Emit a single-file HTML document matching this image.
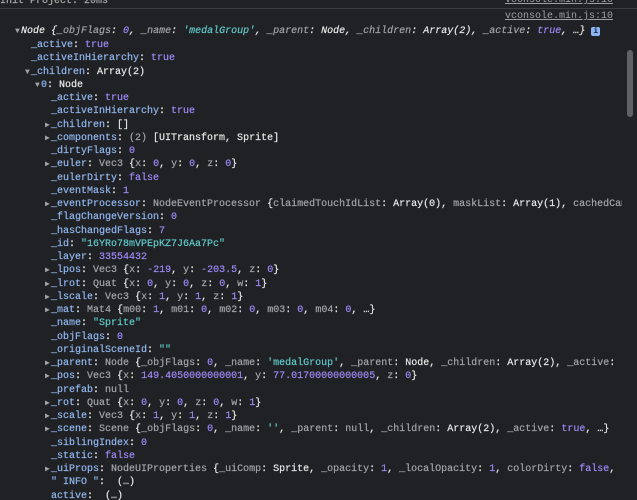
<!DOCTYPE html>
<html><head><meta charset="utf-8"><style>
html,body{margin:0;padding:0;background:#202124;width:637px;height:500px;overflow:hidden}
body{font-family:"Liberation Mono","DejaVu Sans Mono",monospace;font-size:10px;color:#e8e8e8;position:relative}
#c{position:absolute;left:0;top:0;width:622px;height:500px;overflow:hidden}
.l{position:absolute;white-space:pre;line-height:13px;height:13px;left:0;-webkit-text-stroke:0.2px currentColor}
.k{color:#8fb6ee}.v{color:#9d87f5}.s{color:#5fc9c9}.d{color:#a0a4a9}.w{color:#e8e8e8}
.t{color:#a0a4a9;font-size:8px;display:inline-block;width:6px;-webkit-text-stroke:0}
.src{position:absolute;right:24px;color:#9aa0a6;text-decoration:underline;white-space:pre}
.sep{position:absolute;left:0;right:0;top:8px;height:1px;background:#3c3d40}
.sb{position:absolute;left:627px;top:50px;width:6px;height:67px;border-radius:3px;background:#5f6165}
i{font-style:italic}
.info{display:inline-block;width:9px;height:9px;background:#8ab4f8;color:#202124;border-radius:2px;font-size:8px;line-height:9px;text-align:center;font-style:normal;font-weight:bold;vertical-align:0px;-webkit-text-stroke:0}
</style></head><body>
<div class="l" style="top:-5px;left:0;color:#aaa">Init Project: 20ms</div>
<div class="src" style="top:-5px">vconsole.min.js:10</div>
<div class="sep"></div>
<div class="src" style="top:11px">vconsole.min.js:10</div>
<div class="l" style="top:25px;left:15px"><span class="t">▼</span><i>Node {<span class="d">_objFlags</span>: <span class="v">0</span>, <span class="d">_name</span>: <span class="s">'medalGroup'</span>, <span class="d">_parent</span>: Node, <span class="d">_children</span>: Array(2), <span class="d">_active</span>: <span class="v">true</span>, …}</i> <span class="info">i</span></div>
<div id="c">
<div class="l" style="top:39px;left:31px"><span class="k">_active</span>: <span class="v">true</span></div>
<div class="l" style="top:52px;left:31px"><span class="k">_activeInHierarchy</span>: <span class="v">true</span></div>
<div class="l" style="top:66px;left:25px"><span class="t">▼</span><span class="k">_children</span>: Array(2)</div>
<div class="l" style="top:79px;left:35px"><span class="t">▼</span><span class="k">0</span>: Node</div>
<div class="l" style="top:92px;left:51px"><span class="k">_active</span>: <span class="v">true</span></div>
<div class="l" style="top:105px;left:51px"><span class="k">_activeInHierarchy</span>: <span class="v">true</span></div>
<div class="l" style="top:119px;left:45px"><span class="t">▶</span><span class="k">_children</span>: []</div>
<div class="l" style="top:132px;left:45px"><span class="t">▶</span><span class="k">_components</span>: <span class="d">(2)</span> [UITransform, Sprite]</div>
<div class="l" style="top:145px;left:51px"><span class="k">_dirtyFlags</span>: <span class="v">0</span></div>
<div class="l" style="top:158px;left:45px"><span class="t">▶</span><span class="k">_euler</span>: <span class="d">Vec3</span> {<span class="d">x</span>: <span class="v">0</span>, <span class="d">y</span>: <span class="v">0</span>, <span class="d">z</span>: <span class="v">0</span>}</div>
<div class="l" style="top:172px;left:51px"><span class="k">_eulerDirty</span>: <span class="v">false</span></div>
<div class="l" style="top:185px;left:51px"><span class="k">_eventMask</span>: <span class="v">1</span></div>
<div class="l" style="top:198px;left:45px"><span class="t">▶</span><span class="k">_eventProcessor</span>: <span class="d">NodeEventProcessor</span> {<span class="d">claimedTouchIdList</span>: Array(0), <span class="d">maskList</span>: Array(1), <span class="d">cachedCameras</span></div>
<div class="l" style="top:211px;left:51px"><span class="k">_flagChangeVersion</span>: <span class="v">0</span></div>
<div class="l" style="top:225px;left:51px"><span class="k">_hasChangedFlags</span>: <span class="v">7</span></div>
<div class="l" style="top:238px;left:51px"><span class="k">_id</span>: <span class="s">"16YRo78mVPEpKZ7J6Aa7Pc"</span></div>
<div class="l" style="top:251px;left:51px"><span class="k">_layer</span>: <span class="v">33554432</span></div>
<div class="l" style="top:264px;left:45px"><span class="t">▶</span><span class="k">_lpos</span>: <span class="d">Vec3</span> {<span class="d">x</span>: <span class="v">-219</span>, <span class="d">y</span>: <span class="v">-203.5</span>, <span class="d">z</span>: <span class="v">0</span>}</div>
<div class="l" style="top:278px;left:45px"><span class="t">▶</span><span class="k">_lrot</span>: <span class="d">Quat</span> {<span class="d">x</span>: <span class="v">0</span>, <span class="d">y</span>: <span class="v">0</span>, <span class="d">z</span>: <span class="v">0</span>, <span class="d">w</span>: <span class="v">1</span>}</div>
<div class="l" style="top:291px;left:45px"><span class="t">▶</span><span class="k">_lscale</span>: <span class="d">Vec3</span> {<span class="d">x</span>: <span class="v">1</span>, <span class="d">y</span>: <span class="v">1</span>, <span class="d">z</span>: <span class="v">1</span>}</div>
<div class="l" style="top:304px;left:45px"><span class="t">▶</span><span class="k">_mat</span>: <span class="d">Mat4</span> {<span class="d">m00</span>: <span class="v">1</span>, <span class="d">m01</span>: <span class="v">0</span>, <span class="d">m02</span>: <span class="v">0</span>, <span class="d">m03</span>: <span class="v">0</span>, <span class="d">m04</span>: <span class="v">0</span>, …}</div>
<div class="l" style="top:317px;left:51px"><span class="k">_name</span>: <span class="s">"Sprite"</span></div>
<div class="l" style="top:331px;left:51px"><span class="k">_objFlags</span>: <span class="v">0</span></div>
<div class="l" style="top:344px;left:51px"><span class="k">_originalSceneId</span>: <span class="s">""</span></div>
<div class="l" style="top:357px;left:45px"><span class="t">▶</span><span class="k">_parent</span>: <span class="d">Node</span> {<span class="d">_objFlags</span>: <span class="v">0</span>, <span class="d">_name</span>: <span class="s">'medalGroup'</span>, <span class="d">_parent</span>: Node, <span class="d">_children</span>: Array(2), <span class="d">_active</span>: <span class="v">true</span></div>
<div class="l" style="top:370px;left:45px"><span class="t">▶</span><span class="k">_pos</span>: <span class="d">Vec3</span> {<span class="d">x</span>: <span class="v">149.4050000000001</span>, <span class="d">y</span>: <span class="v">77.01700000000005</span>, <span class="d">z</span>: <span class="v">0</span>}</div>
<div class="l" style="top:384px;left:51px"><span class="k">_prefab</span>: <span class="d">null</span></div>
<div class="l" style="top:397px;left:45px"><span class="t">▶</span><span class="k">_rot</span>: <span class="d">Quat</span> {<span class="d">x</span>: <span class="v">0</span>, <span class="d">y</span>: <span class="v">0</span>, <span class="d">z</span>: <span class="v">0</span>, <span class="d">w</span>: <span class="v">1</span>}</div>
<div class="l" style="top:410px;left:45px"><span class="t">▶</span><span class="k">_scale</span>: <span class="d">Vec3</span> {<span class="d">x</span>: <span class="v">1</span>, <span class="d">y</span>: <span class="v">1</span>, <span class="d">z</span>: <span class="v">1</span>}</div>
<div class="l" style="top:423px;left:45px"><span class="t">▶</span><span class="k">_scene</span>: <span class="d">Scene</span> {<span class="d">_objFlags</span>: <span class="v">0</span>, <span class="d">_name</span>: <span class="s">''</span>, <span class="d">_parent</span>: <span class="d">null</span>, <span class="d">_children</span>: Array(2), <span class="d">_active</span>: <span class="v">true</span>, …}</div>
<div class="l" style="top:437px;left:51px"><span class="k">_siblingIndex</span>: <span class="v">0</span></div>
<div class="l" style="top:450px;left:51px"><span class="k">_static</span>: <span class="v">false</span></div>
<div class="l" style="top:463px;left:45px"><span class="t">▶</span><span class="k">_uiProps</span>: <span class="d">NodeUIProperties</span> {<span class="d">_uiComp</span>: Sprite, <span class="d">_opacity</span>: <span class="v">1</span>, <span class="d">_localOpacity</span>: <span class="v">1</span>, <span class="d">colorDirty</span>: <span class="v">false</span>,</div>
<div class="l" style="top:476px;left:51px"><span class="k">" INFO "</span>:  (…)</div>
<div class="l" style="top:490px;left:51px"><span class="k">active</span>:  (…)</div>
</div>
<div class="sb"></div>
</body></html>
